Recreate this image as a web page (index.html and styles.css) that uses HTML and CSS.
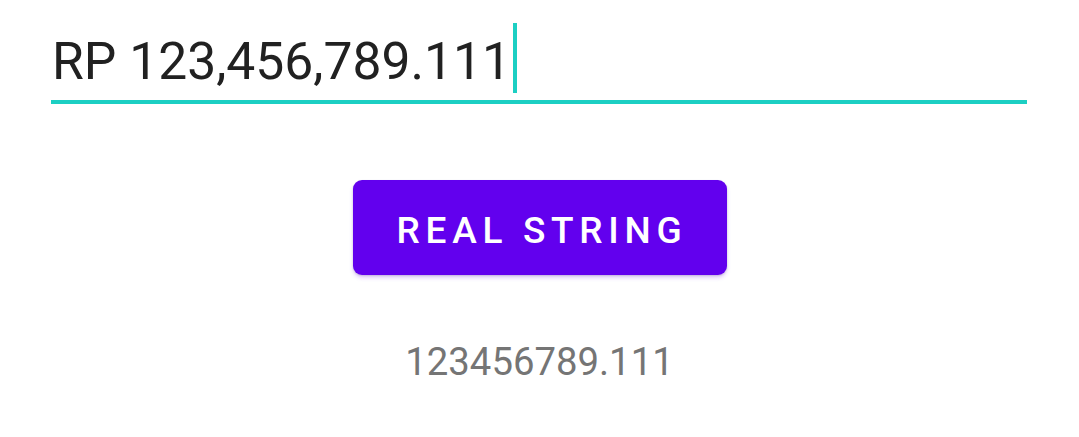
FILE: index.html
```html
<!DOCTYPE html>
<html>
<head>
<meta charset="utf-8">
<link rel="stylesheet" href="styles.css">
</head>
<body>
<div class="screen">
  <div class="field">
    <div class="field-text">RP 123,456,789.111<span class="cursor"></span></div>
  </div>
  <button class="btn">REAL STRING</button>
  <div class="result">123456789.111</div>
</div>
</body>
</html>
```
FILE: styles.css
```css
html, body {
  margin: 0;
  padding: 0;
  background: #ffffff;
}
.screen {
  width: 1079px;
  height: 437px;
  display: flex;
  flex-direction: column;
  align-items: center;
  font-family: Roboto, "Noto Sans", sans-serif;
  overflow: hidden;
}
.field {
  align-self: stretch;
  margin: 0 52px 0 51px;
  padding-top: 32px;
  height: 68px;
  border-bottom: 4px solid #1ccfc3;
}
.field-text {
  display: flex;
  align-items: flex-start;
  font-size: 51.6px;
  color: #212121;
  line-height: 60px;
  padding-left: 1px;
}
.cursor {
  display: inline-block;
  width: 4px;
  height: 70px;
  background: #1ccfc3;
  margin-left: 2px;
  margin-top: -9px;
}
.btn {
  margin-top: 76px;
  width: 374px;
  height: 95px;
  border: none;
  border-radius: 9px;
  background: #6200ee;
  color: #ffffff;
  font-family: Roboto, "Noto Sans", sans-serif;
  font-weight: 500;
  font-size: 37px;
  letter-spacing: 5.7px;
  padding: 6px 0 0 5px;
  box-shadow: 0 3px 4px rgba(98, 0, 238, 0.18), 0 1px 2px rgba(0,0,0,0.15);
}
.result {
  margin-top: 64px;
  font-size: 38.3px;
  color: #757575;
}
```
